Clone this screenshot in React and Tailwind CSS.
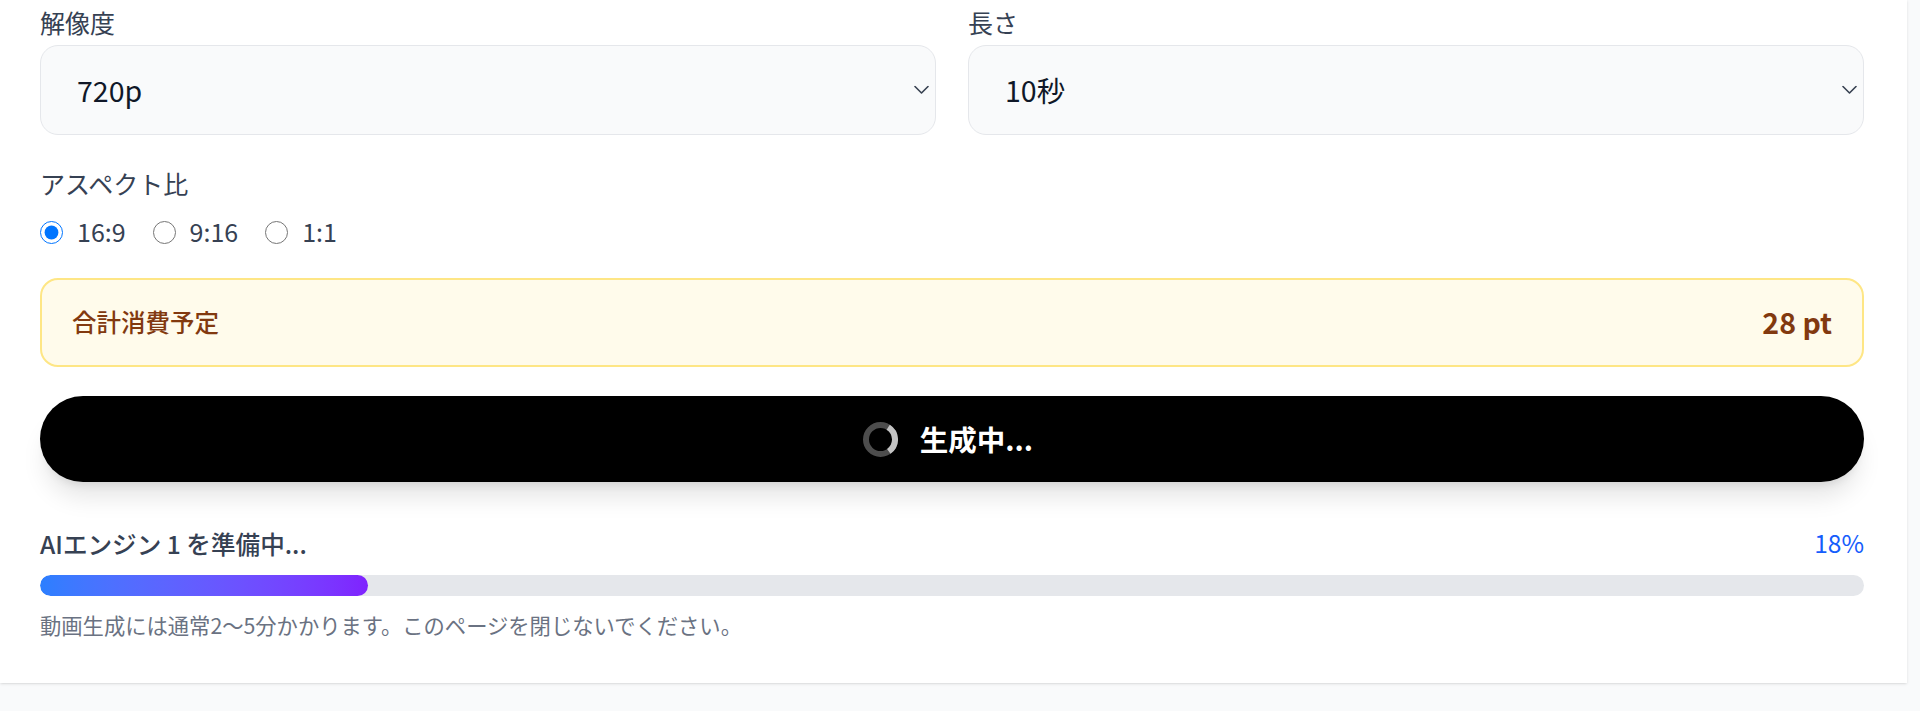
import React, { useState } from 'react';

const SelectField = ({ label, value, options }) => (
  <div>
    <label className="block text-[25px] leading-[36px] text-gray-700 mb-[5px]">{label}</label>
    <div className="relative">
      <select
        defaultValue={value}
        className="w-full h-[90px] appearance-none rounded-[18px] border border-gray-200 bg-gray-50 pl-[36px] pr-12 text-[28.5px] text-gray-900 outline-none"
      >
        {options.map((o) => <option key={o} value={o}>{o}</option>)}
      </select>
      <svg
        className="pointer-events-none absolute right-[7px] top-1/2 -translate-y-1/2"
        width="15" height="9" viewBox="0 0 15 9" fill="none"
      >
        <path d="M1 1L7.5 7.5L14 1" stroke="#374151" strokeWidth="1.6" strokeLinecap="round" strokeLinejoin="round" />
      </svg>
    </div>
  </div>
);

const Spinner = () => (
  <svg width="35" height="35" viewBox="0 0 35 35" fill="none">
    <circle cx="17.5" cy="17.5" r="14.5" stroke="#4d4d4d" strokeWidth="6" />
    <path d="M25.2 5.2 A14.5 14.5 0 0 1 25.8 29.4" stroke="#c4c4c4" strokeWidth="6" />
  </svg>
);

export default function App() {
  const [ratio, setRatio] = useState('16:9');
  const progress = 18;

  return (
    <div className="min-h-screen bg-gray-50 font-['Noto_Sans_CJK_JP','Noto_Sans',sans-serif]">
      <div className="w-[1907px] bg-white shadow-sm pl-10 pr-[43px] pt-[4px] pb-[42px]">
        <div className="grid grid-cols-2 gap-8">
          <SelectField label="解像度" value="720p" options={['480p', '720p', '1080p']} />
          <SelectField label="長さ" value="10秒" options={['5秒', '10秒', '15秒']} />
        </div>

        {/* aspect ratio */}
        <div className="mt-[30px]">
          <div className="text-[25px] leading-[36px] text-gray-700">アスペクト比</div>
          <div className="mt-[13px] flex items-center gap-[27px] h-[36px]">
            {['16:9', '9:16', '1:1'].map((r) => (
              <label key={r} className="flex items-center gap-[14px] text-[25px] text-gray-700">
                <input
                  type="radio"
                  name="ratio"
                  checked={ratio === r}
                  onChange={() => setRatio(r)}
                  className="m-0 w-[23px] h-[23px]"
                />
                {r}
              </label>
            ))}
          </div>
        </div>

        {/* cost */}
        <div className="mt-[28px] h-[89px] flex items-center justify-between rounded-[18px] border-2 border-amber-200 bg-amber-50 px-[30px]">
          <span className="text-[24.5px] font-medium text-[#82390f]">合計消費予定</span>
          <span className="text-[28.5px] font-bold text-[#82390f]">28 pt</span>
        </div>

        {/* generate button */}
        <button
          type="button"
          disabled
          className="mt-[29px] w-full h-[86px] rounded-full bg-black text-white flex items-center justify-center gap-[22px] pr-2 shadow-xl"
        >
          <Spinner />
          <span className="text-[28.5px] font-bold">生成中...</span>
        </button>

        {/* progress */}
        <div className="mt-[43px]">
          <div className="flex items-center justify-between h-[36px]">
            <span className="text-[24.6px] font-medium text-gray-700">AIエンジン 1 を準備中...</span>
            <span className="text-[24.5px] text-blue-600">{progress}%</span>
          </div>
          <div className="mt-[14px] h-[21px] w-full rounded-full bg-gray-200 overflow-hidden">
            <div
              className="h-full rounded-full bg-gradient-to-r from-blue-500 to-violet-600"
              style={{ width: `${progress}%` }}
            />
          </div>
          <p className="mt-[13px] text-[21.3px] leading-[32px] text-gray-500">
            動画生成には通常2〜5分かかります。このページを閉じないでください。
          </p>
        </div>
      </div>
    </div>
  );
}
